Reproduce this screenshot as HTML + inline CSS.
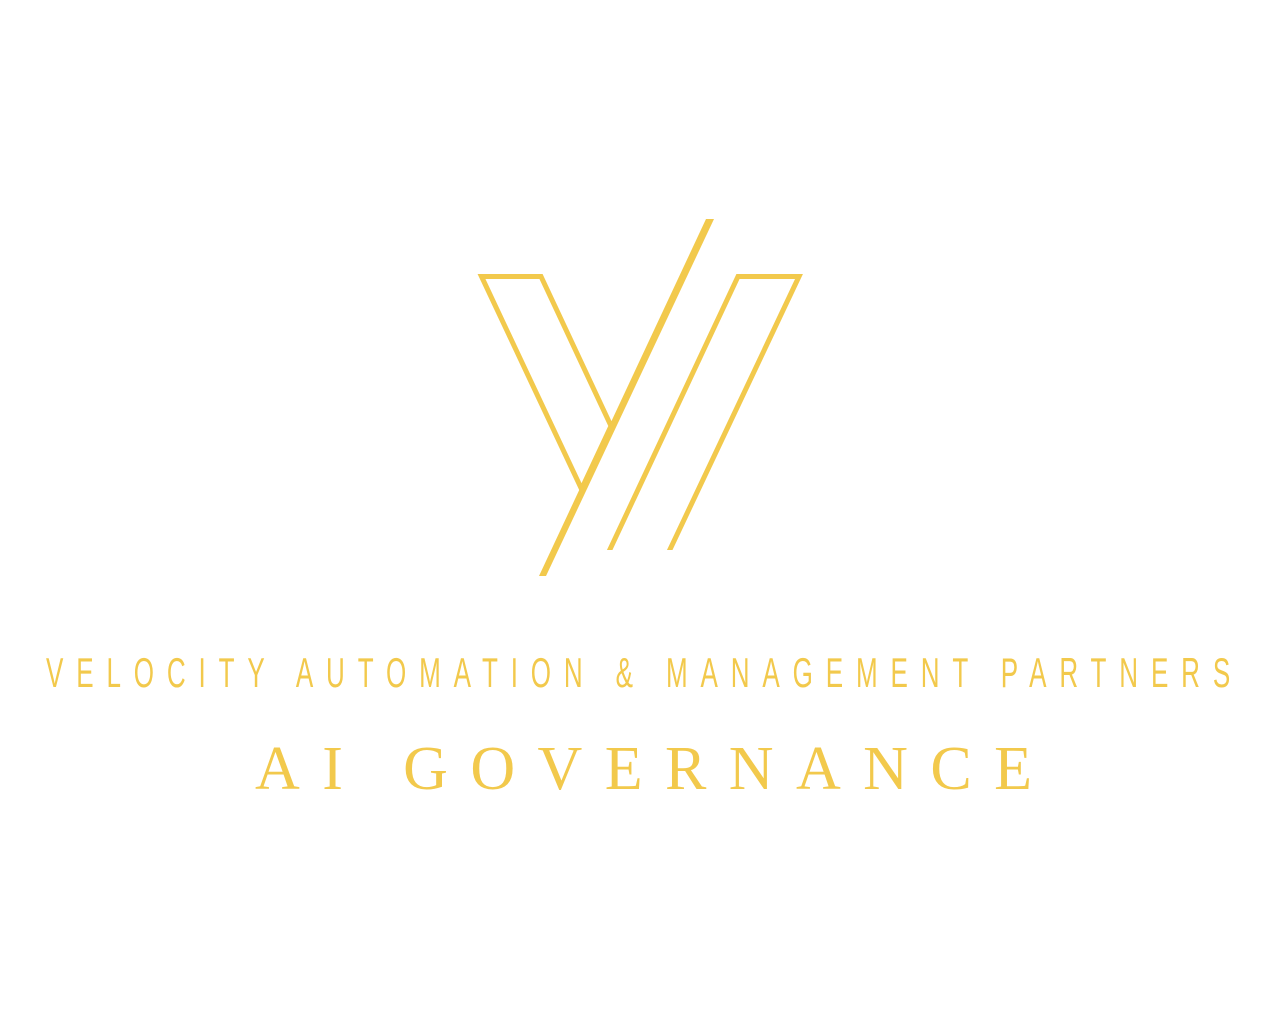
<!DOCTYPE html>
<html><head><style>html,body{margin:0;padding:0;background:#fff;width:1280px;height:1024px;overflow:hidden}</style></head>
<body>
<svg width="1280" height="1024" viewBox="0 0 1280 1024" xmlns="http://www.w3.org/2000/svg">
<defs><clipPath id="c"><rect x="0" y="0" width="1280" height="550"/></clipPath></defs>
<g fill="none" stroke="#F2C94C" stroke-width="5" stroke-linejoin="miter" stroke-linecap="butt">
<polygon points="481.5,276.5 541,276.5 611,426 581.5,489"/>
<polyline clip-path="url(#c)" points="605,560 738,276.5 799,276.5 665,560"/>
</g>
<polygon fill="#F2C94C" points="706,219 714,219 546,576 539,576"/>
<g transform="scale(0.62,1)">
<text x="74.2" y="687" textLength="1910" lengthAdjust="spacing" font-family="Liberation Sans Narrow, Liberation Sans, sans-serif" font-size="42" fill="#F2C94C">VELOCITY AUTOMATION &amp; MANAGEMENT PARTNERS</text>
</g>
<text x="255" y="789" textLength="777" lengthAdjust="spacing" font-family="Liberation Serif, serif" font-size="62" fill="#F2C94C">AI GOVERNANCE</text>
</svg>
</body></html>
